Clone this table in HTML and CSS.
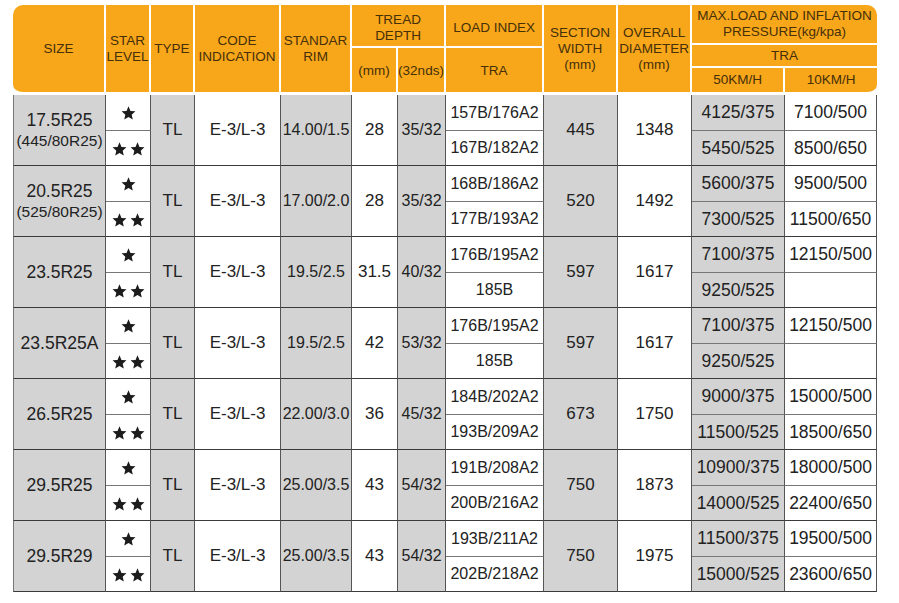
FILE: index.html
```html
<!DOCTYPE html>
<html>
<head>
<meta charset="utf-8">
<link rel="stylesheet" href="styles.css">
</head>
<body>
<svg class="defs" width="0" height="0" aria-hidden="true">
<defs>
<symbol id="star" viewBox="0 0 24 23">
<polygon points="12,0.5 15.23,8.05 23.41,8.79 17.23,14.2 19.05,22.21 12,18 4.95,22.21 6.77,14.2 0.59,8.79 8.77,8.05"/>
</symbol>
</defs>
</svg>
<table class="spec">
<colgroup>
<col class="c-size"><col class="c-star"><col class="c-type"><col class="c-code"><col class="c-rim"><col class="c-mm"><col class="c-32"><col class="c-load"><col class="c-sec"><col class="c-dia"><col class="c-50"><col class="c-10">
</colgroup>
<thead>
<tr class="h1">
<th rowspan="4" class="first bot">SIZE</th>
<th rowspan="4" class="bot">STAR<br>LEVEL</th>
<th rowspan="4" class="bot">TYPE</th>
<th rowspan="4" class="bot">CODE<br>INDICATION</th>
<th rowspan="4" class="bot">STANDAR<br>RIM</th>
<th colspan="2" rowspan="2" class="split down">TREAD<br>DEPTH</th>
<th rowspan="2" class="split down">LOAD INDEX</th>
<th rowspan="4" class="bot">SECTION<br>WIDTH<br>(mm)</th>
<th rowspan="4" class="bot">OVERALL<br>DIAMETER<br>(mm)</th>
<th colspan="2" class="split last tr">MAX.LOAD AND INFLATION<br>PRESSURE(kg/kpa)</th>
</tr>
<tr class="h1b">
<th colspan="2" rowspan="2" class="split last">TRA</th>
</tr>
<tr class="h2">
<th rowspan="2" class="bot low">(mm)</th>
<th rowspan="2" class="bot low">(32nds)</th>
<th rowspan="2" class="bot low">TRA</th>
</tr>
<tr class="h3">
<th class="bot">50KM/H</th>
<th class="bot last br">10KM/H</th>
</tr>
</thead>
<tbody>
<tr class="a">
<td rowspan="2" class="g size">17.5R25<br><span class="alt">(445/80R25)</span></td>
<td class="star"><span class="stars" aria-label="★"><svg><use href="#star"/></svg></span></td>
<td rowspan="2" class="g">TL</td>
<td rowspan="2">E-3/L-3</td>
<td rowspan="2" class="g rim">14.00/1.5</td>
<td rowspan="2">28</td>
<td rowspan="2" class="g rim">35/32</td>
<td class="load">157B/176A2</td>
<td rowspan="2" class="g">445</td>
<td rowspan="2">1348</td>
<td class="g p">4125/375</td>
<td class="p">7100/500</td>
</tr>
<tr class="b">
<td class="star"><span class="stars" aria-label="★★"><svg><use href="#star"/></svg><svg><use href="#star"/></svg></span></td>
<td class="load">167B/182A2</td>
<td class="g p">5450/525</td>
<td class="p">8500/650</td>
</tr>

<tr class="a">
<td rowspan="2" class="g size">20.5R25<br><span class="alt">(525/80R25)</span></td>
<td class="star"><span class="stars" aria-label="★"><svg><use href="#star"/></svg></span></td>
<td rowspan="2" class="g">TL</td>
<td rowspan="2">E-3/L-3</td>
<td rowspan="2" class="g rim">17.00/2.0</td>
<td rowspan="2">28</td>
<td rowspan="2" class="g rim">35/32</td>
<td class="load">168B/186A2</td>
<td rowspan="2" class="g">520</td>
<td rowspan="2">1492</td>
<td class="g p">5600/375</td>
<td class="p">9500/500</td>
</tr>
<tr class="b">
<td class="star"><span class="stars" aria-label="★★"><svg><use href="#star"/></svg><svg><use href="#star"/></svg></span></td>
<td class="load">177B/193A2</td>
<td class="g p">7300/525</td>
<td class="p">11500/650</td>
</tr>

<tr class="a">
<td rowspan="2" class="g size">23.5R25</td>
<td class="star"><span class="stars" aria-label="★"><svg><use href="#star"/></svg></span></td>
<td rowspan="2" class="g">TL</td>
<td rowspan="2">E-3/L-3</td>
<td rowspan="2" class="g rim">19.5/2.5</td>
<td rowspan="2">31.5</td>
<td rowspan="2" class="g rim">40/32</td>
<td class="load">176B/195A2</td>
<td rowspan="2" class="g">597</td>
<td rowspan="2">1617</td>
<td class="g p">7100/375</td>
<td class="p">12150/500</td>
</tr>
<tr class="b">
<td class="star"><span class="stars" aria-label="★★"><svg><use href="#star"/></svg><svg><use href="#star"/></svg></span></td>
<td class="load">185B</td>
<td class="g p">9250/525</td>
<td class="p"></td>
</tr>

<tr class="a">
<td rowspan="2" class="g size">23.5R25A</td>
<td class="star"><span class="stars" aria-label="★"><svg><use href="#star"/></svg></span></td>
<td rowspan="2" class="g">TL</td>
<td rowspan="2">E-3/L-3</td>
<td rowspan="2" class="g rim">19.5/2.5</td>
<td rowspan="2">42</td>
<td rowspan="2" class="g rim">53/32</td>
<td class="load">176B/195A2</td>
<td rowspan="2" class="g">597</td>
<td rowspan="2">1617</td>
<td class="g p">7100/375</td>
<td class="p">12150/500</td>
</tr>
<tr class="b">
<td class="star"><span class="stars" aria-label="★★"><svg><use href="#star"/></svg><svg><use href="#star"/></svg></span></td>
<td class="load">185B</td>
<td class="g p">9250/525</td>
<td class="p"></td>
</tr>

<tr class="a">
<td rowspan="2" class="g size">26.5R25</td>
<td class="star"><span class="stars" aria-label="★"><svg><use href="#star"/></svg></span></td>
<td rowspan="2" class="g">TL</td>
<td rowspan="2">E-3/L-3</td>
<td rowspan="2" class="g rim">22.00/3.0</td>
<td rowspan="2">36</td>
<td rowspan="2" class="g rim">45/32</td>
<td class="load">184B/202A2</td>
<td rowspan="2" class="g">673</td>
<td rowspan="2">1750</td>
<td class="g p">9000/375</td>
<td class="p">15000/500</td>
</tr>
<tr class="b">
<td class="star"><span class="stars" aria-label="★★"><svg><use href="#star"/></svg><svg><use href="#star"/></svg></span></td>
<td class="load">193B/209A2</td>
<td class="g p">11500/525</td>
<td class="p">18500/650</td>
</tr>

<tr class="a">
<td rowspan="2" class="g size">29.5R25</td>
<td class="star"><span class="stars" aria-label="★"><svg><use href="#star"/></svg></span></td>
<td rowspan="2" class="g">TL</td>
<td rowspan="2">E-3/L-3</td>
<td rowspan="2" class="g rim">25.00/3.5</td>
<td rowspan="2">43</td>
<td rowspan="2" class="g rim">54/32</td>
<td class="load">191B/208A2</td>
<td rowspan="2" class="g">750</td>
<td rowspan="2">1873</td>
<td class="g p">10900/375</td>
<td class="p">18000/500</td>
</tr>
<tr class="b">
<td class="star"><span class="stars" aria-label="★★"><svg><use href="#star"/></svg><svg><use href="#star"/></svg></span></td>
<td class="load">200B/216A2</td>
<td class="g p">14000/525</td>
<td class="p">22400/650</td>
</tr>

<tr class="a">
<td rowspan="2" class="g size">29.5R29</td>
<td class="star"><span class="stars" aria-label="★"><svg><use href="#star"/></svg></span></td>
<td rowspan="2" class="g">TL</td>
<td rowspan="2">E-3/L-3</td>
<td rowspan="2" class="g rim">25.00/3.5</td>
<td rowspan="2">43</td>
<td rowspan="2" class="g rim">54/32</td>
<td class="load">193B/211A2</td>
<td rowspan="2" class="g">750</td>
<td rowspan="2">1975</td>
<td class="g p">11500/375</td>
<td class="p">19500/500</td>
</tr>
<tr class="b">
<td class="star"><span class="stars" aria-label="★★"><svg><use href="#star"/></svg><svg><use href="#star"/></svg></span></td>
<td class="load">202B/218A2</td>
<td class="g p">15000/525</td>
<td class="p">23600/650</td>
</tr>
</tbody>
</table>
</body>
</html>
```

FILE: styles.css
```css
html, body {
  margin: 0;
  padding: 0;
  background: #ffffff;
}

body {
  padding: 5px 0 0 13px;
  font-family: "Liberation Sans", Arial, sans-serif;
}

.defs {
  position: absolute;
  width: 0;
  height: 0;
  overflow: hidden;
}

.spec {
  border-collapse: separate;
  border-spacing: 0;
  table-layout: fixed;
  width: 864px;
}

.c-size { width: 93px; }
.c-star { width: 45px; }
.c-type { width: 44px; }
.c-code { width: 86px; }
.c-rim { width: 71px; }
.c-mm { width: 46px; }
.c-32 { width: 48px; }
.c-load { width: 98px; }
.c-sec { width: 74px; }
.c-dia { width: 74px; }
.c-50 { width: 93px; }
.c-10 { width: 92px; }

.spec th {
  box-sizing: border-box;
  background: #f8a61a;
  color: #45300a;
  font-weight: normal;
  font-size: 13.5px;
  line-height: 16px;
  padding: 0;
  text-align: center;
  vertical-align: middle;
  border-right: 2px solid #ffffff;
  white-space: nowrap;
}

.spec th.last { border-right: 0; }
.spec th.split { border-bottom: 2px solid #ffffff; }
.spec th.bot { border-bottom: 3px solid #ffffff; }
.spec th.low { padding-top: 2px; }
.spec th.down { padding-top: 5px; }

.spec tr.h1 { height: 40px; }
.spec tr.h1b { height: 3px; }
.spec tr.h2 { height: 20px; }
.spec tr.h3 { height: 27px; }

.spec th.first { border-radius: 10px 0 0 10px; }
.spec th.tr { border-top-right-radius: 10px; }
.spec th.br { border-bottom-right-radius: 10px; }

.spec td {
  box-sizing: border-box;
  padding: 0;
  text-align: center;
  vertical-align: middle;
  font-size: 17px;
  color: #222222;
  background: #ffffff;
  border-right: 1px solid #555555;
  border-bottom: 1px solid #3a3a3a;
  white-space: nowrap;
}

.spec td.g { background: #d3d3d3; }

.spec tr.a td { height: 36px; }
.spec tr.b td { height: 35px; }

.spec tr.a td.star,
.spec tr.a td.load,
.spec tr.a td.p { border-bottom: 1px solid #777777; }

.spec td.size {
  border-left: 1px solid #777777;
  font-size: 17.5px;
  line-height: 20px;
}

.spec td.size .alt { font-size: 15.5px; }

.spec td.star {
  line-height: 0;
}

.stars {
  display: inline-flex;
  gap: 3px;
  padding-left: 1px;
  padding-top: 1px;
}

.stars svg {
  display: block;
  width: 15px;
  height: 14px;
  fill: #1c1c1c;
}

.spec td.rim { font-size: 16px; }
.spec td.load { font-size: 16px; }
.spec td.p { font-size: 17.5px; }
```
